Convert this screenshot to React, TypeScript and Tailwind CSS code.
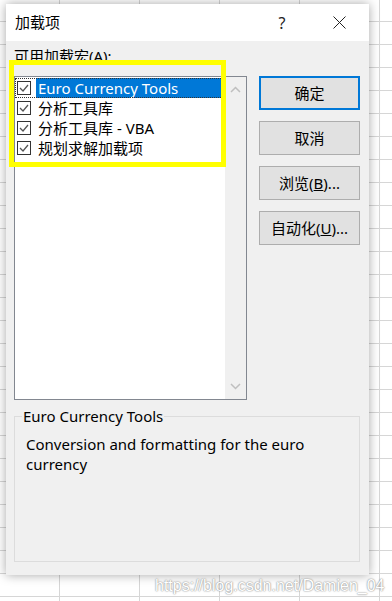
import React from "react";

const Check = () => (
  <div className="w-[14px] h-[14px] border border-[#333333] bg-white flex items-center justify-center shrink-0">
    <svg width="12" height="12" viewBox="0 0 12 12">
      <polyline points="2,6 5,9 10,3" fill="none" stroke="#555555" strokeWidth="1.3" />
    </svg>
  </div>
);

function Row({ label, selected }: { label: string; selected?: boolean }) {
  return (
    <div
      className={
        "h-[20px] flex items-center " +
        (selected ? "outline outline-1 outline-dotted outline-[#333] -outline-offset-1" : "")
      }
    >
      <div className="w-[21px] flex items-center justify-end pr-[5px] h-full">
        <Check />
      </div>
      <div
        className={
          "h-full flex items-center pl-[2px] flex-1 text-[15px] leading-[20px] " +
          (selected ? "bg-[#0078d7] text-white" : "text-black")
        }
      >
        {label}
      </div>
    </div>
  );
}

function Btn({ children, primary }: { children: React.ReactNode; primary?: boolean }) {
  return (
    <div
      className={
        "h-[34px] w-[101px] bg-[#e1e1e1] flex items-center justify-center text-[15px] text-black " +
        (primary ? "border-2 border-[#0078d7]" : "border border-[#adadad]")
      }
    >
      {children}
    </div>
  );
}

export default function App() {
  return (
    <div className="relative w-[392px] h-[601px] overflow-hidden bg-white bg-[linear-gradient(to_right,#d6d6d6_1px,transparent_1px),linear-gradient(to_bottom,#d6d6d6_1px,transparent_1px)] bg-[size:80px_23px] bg-[position:59px_21px] pl-[6px] pt-[4px] font-['Noto_Sans','Noto_Sans_CJK_SC',sans-serif]">
      <div className="w-[363px] h-[571px] bg-[#f0f0f0] shadow-[0_0_10px_rgba(0,0,0,0.35)] flex flex-col">
        {/* title bar */}
        <div className="h-[37px] bg-white flex items-center pl-[9px] shrink-0">
          <div className="flex-1 text-[15px] text-black">加载项</div>
          <div className="w-[40px] text-center text-[16px] text-[#222]">?</div>
          <div className="w-[20px]" />
          <div className="w-[34px] flex items-center justify-center">
            <svg width="13" height="13" viewBox="0 0 13 13">
              <path d="M0.5 0.5 L12.5 12.5 M12.5 0.5 L0.5 12.5" stroke="#222" strokeWidth="1" />
            </svg>
          </div>
          <div className="w-[13px]" />
        </div>
        {/* body */}
        <div className="flex-1 flex flex-col px-[8px] pt-[5px] pb-[13px]">
          <div className="h-[20px] leading-[20px] text-[15px] text-black">
            可用加载宏(<span className="underline">A</span>):
          </div>
          <div className="mt-[10px] flex gap-[12px]">
            <div className="w-[233px] h-[324px] border border-[#828790] bg-white flex">
              <div className="flex-1 pt-[1px]">
                <Row label="Euro Currency Tools" selected />
                <Row label="分析工具库" />
                <Row label="分析工具库 - VBA" />
                <Row label="规划求解加载项" />
              </div>
              <div className="w-[21px] bg-[#f0f0f0] flex flex-col items-center justify-between py-[9px]">
                <svg width="11" height="7" viewBox="0 0 11 7">
                  <polyline points="1,6 5.5,1.5 10,6" fill="none" stroke="#bfbfbf" strokeWidth="1.5" />
                </svg>
                <svg width="11" height="7" viewBox="0 0 11 7">
                  <polyline points="1,1 5.5,5.5 10,1" fill="none" stroke="#bfbfbf" strokeWidth="1.5" />
                </svg>
              </div>
            </div>
            <div className="flex flex-col gap-[11px]">
              <Btn primary>确定</Btn>
              <Btn>取消</Btn>
              <Btn>
                浏览(<span className="underline">B</span>)...
              </Btn>
              <Btn>
                自动化(<span className="underline">U</span>)...
              </Btn>
            </div>
          </div>
          <fieldset className="mt-[6px] w-[346px] flex-1 border border-[#dcdcdc] p-0">
            <legend className="ml-[7px] px-[1px] text-[15px] leading-[20px] text-black">Euro Currency Tools</legend>
            <div className="mt-[8px] pl-[11px] pr-[8px] text-[15px] leading-[20px] text-black">
              Conversion and formatting for the euro currency
            </div>
          </fieldset>
        </div>
      </div>
      {/* yellow annotation box */}
      <div className="absolute left-[9px] top-[60px] w-[217px] h-[107px] border-[5px] border-[#ffff00]" />
      {/* watermark */}
      <div className="absolute left-[155px] top-[576px] text-[16px] leading-[20px] text-white font-['Liberation_Sans',sans-serif] [text-shadow:0_0_2px_#8a8a8a,0_0_1px_#9a9a9a]">
        https://blog.csdn.net/Damien_04
      </div>
    </div>
  );
}
